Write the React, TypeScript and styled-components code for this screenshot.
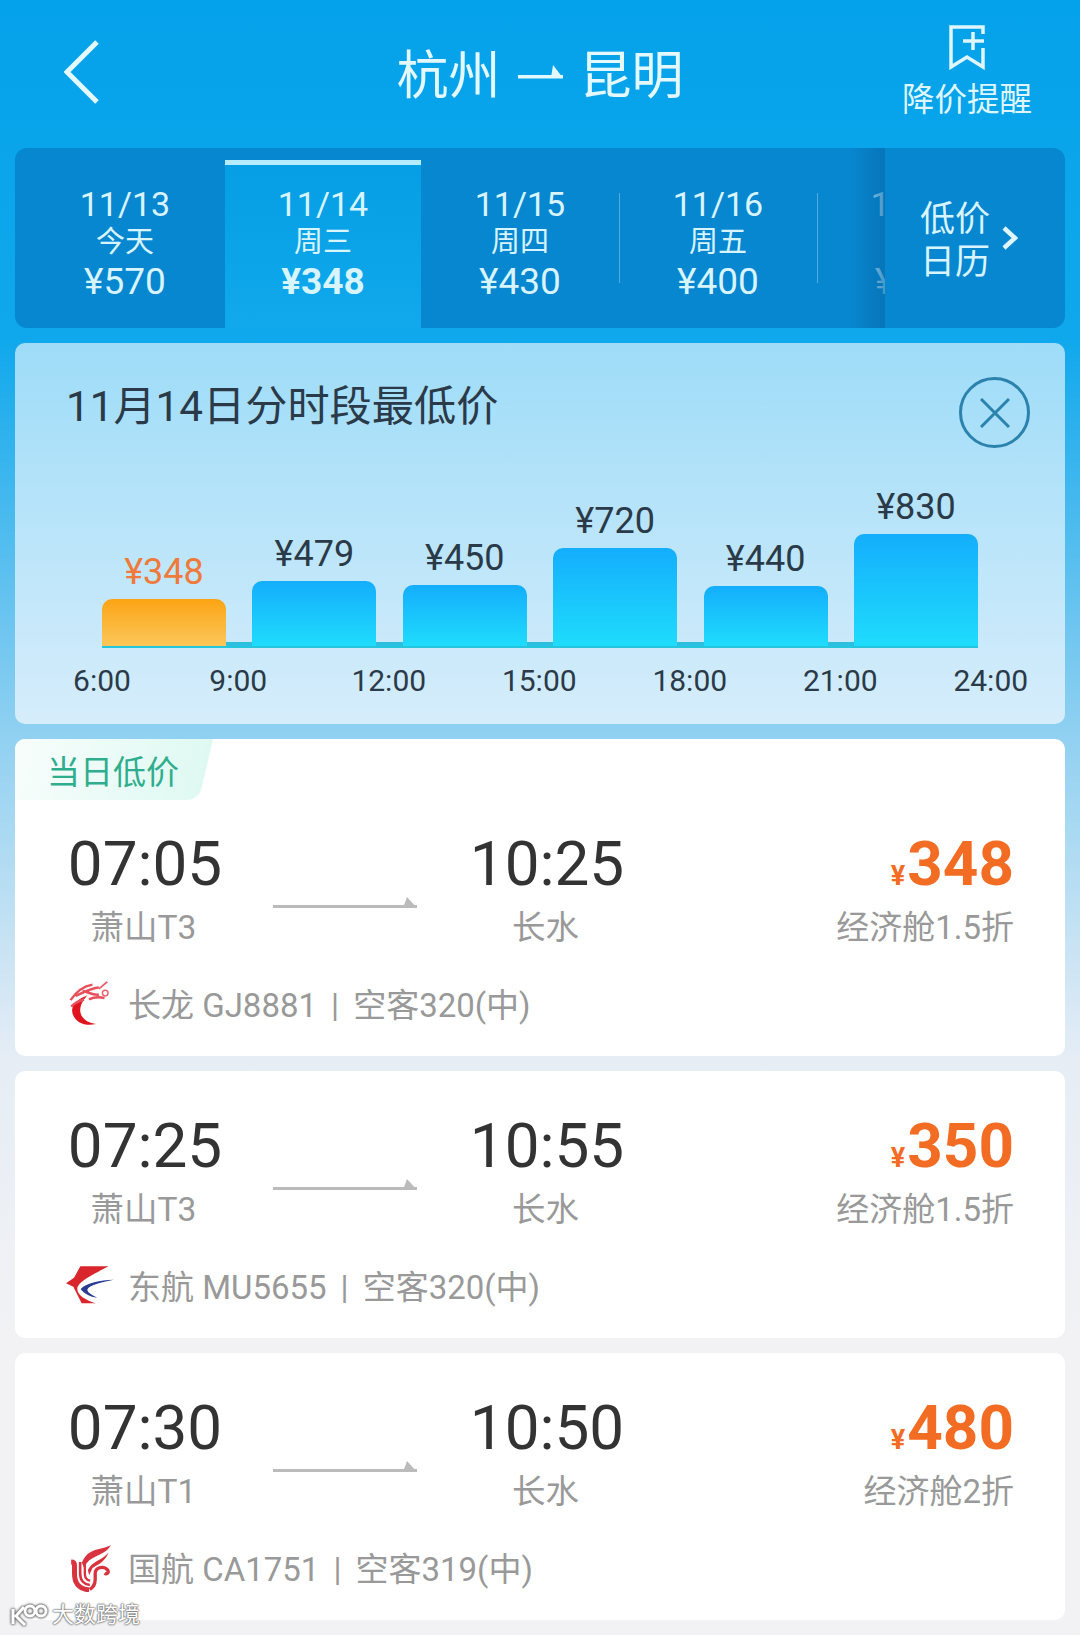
import React from 'react';
import styled, { createGlobalStyle } from 'styled-components';

const GlobalStyle = createGlobalStyle`
  html, body {
    margin: 0;
    padding: 0;
  }
  body {
    font-family: Roboto, "Noto Sans CJK SC", sans-serif;
  }
`;

const Page = styled.div`
  position: relative;
  width: 1080px;
  height: 1635px;
  overflow: hidden;
  background: linear-gradient(
    180deg,
    #04a2ea 0,
    #10a8ec 340px,
    #8fd0f1 730px,
    #e6edf5 1060px,
    #f2f2f5 1340px
  );
`;

const Header = styled.header`
  height: 148px;
  display: grid;
  grid-template-columns: 1fr auto 1fr;
  align-items: center;
  color: #dff6ff;
`;

const BackButton = styled.div`
  padding-left: 64px;
  margin-top: -4px;
  display: flex;
  align-items: center;
`;

const Title = styled.h1`
  margin: 5px 0 0;
  display: flex;
  align-items: center;
  gap: 17px;
  font-size: 52px;
  line-height: 60px;
  font-weight: 400;
  color: #e4f8ff;
`;

const TitleArrow = styled.svg`
  margin-top: -10px;
`;

const Remind = styled.div`
  justify-self: end;
  padding-right: 48px;
  display: flex;
  flex-direction: column;
  align-items: center;
  gap: 10px;
  font-size: 32.5px;
  line-height: 40px;
  margin-top: -4px;
`;

const TabBar = styled.nav`
  margin: 0 15px;
  height: 180px;
  display: flex;
  border-radius: 12px;
  overflow: hidden;
  background: #0787d0;
  color: #d8f4ff;
`;

const TabScroller = styled.div`
  position: relative;
  width: 870px;
  display: flex;
  overflow: hidden;
  &::after {
    content: '';
    position: absolute;
    top: 0;
    right: 0;
    bottom: 0;
    width: 36px;
    background: linear-gradient(90deg, rgba(7, 110, 175, 0), rgba(7, 110, 175, 0.7));
  }
`;

const Tab = styled.div<{ $active?: boolean; $first?: boolean; $divider?: boolean }>`
  position: relative;
  flex: 0 0 ${(p) => (p.$first ? 210 : p.$active ? 196 : 198)}px;
  box-sizing: border-box;
  margin-top: ${(p) => (p.$active ? 12 : 0)}px;
  padding-top: ${(p) => (p.$active ? 20 : 37)}px;
  padding-left: ${(p) => (p.$first ? 10 : 0)}px;
  display: flex;
  flex-direction: column;
  align-items: center;
  background: ${(p) => (p.$active ? 'linear-gradient(180deg, #069ee4, #11a9ec)' : 'transparent')};
  border-top: ${(p) => (p.$active ? '5px solid #b4ecfc' : 'none')};
  &::after {
    content: '';
    display: ${(p) => (p.$divider ? 'block' : 'none')};
    position: absolute;
    top: 45px;
    right: -1px;
    width: 1px;
    height: 90px;
    background: rgba(255, 255, 255, 0.3);
  }
`;

const TabDate = styled.div`
  font-size: 34px;
  line-height: 38px;
`;

const TabWeek = styled.div`
  font-size: 29px;
  line-height: 38px;
`;

const TabPrice = styled.div<{ $active?: boolean }>`
  font-size: 37px;
  line-height: 42px;
  font-weight: ${(p) => (p.$active ? 700 : 400)};
`;

const CalendarLink = styled.div`
  flex: 1;
  display: flex;
  align-items: center;
  padding-left: 35px;
  gap: 12px;
  font-size: 35px;
  line-height: 43px;
`;

const CalendarText = styled.div`
  margin-top: 5px;
`;

const Panel = styled.section`
  margin: 15px 15px 0;
  height: 381px;
  box-sizing: border-box;
  border-radius: 10px;
  background: linear-gradient(180deg, #9edcf8, #d6edfb);
`;

const PanelHead = styled.div`
  height: 105px;
  box-sizing: border-box;
  padding: 34px 35px 0 51px;
  display: flex;
  justify-content: space-between;
`;

const PanelTitle = styled.h2`
  margin: -5px 0 0;
  font-size: 42.2px;
  line-height: 70px;
  font-weight: 400;
  color: #2a3a48;
`;

const CloseButton = styled.div`
  width: 71px;
  height: 71px;
  box-sizing: border-box;
  border: 3px solid #2b82ac;
  border-radius: 50%;
  display: flex;
  align-items: center;
  justify-content: center;
`;

const Chart = styled.div`
  margin-left: 87px;
  width: 876px;
  height: 200px;
  box-sizing: border-box;
  display: flex;
  align-items: flex-end;
  border-bottom: 2px solid #25c6dc;
`;

const BarColumn = styled.div`
  flex: 0 0 124px;
  display: flex;
  flex-direction: column;
  align-items: center;
`;

const BarLabel = styled.div<{ $low?: boolean }>`
  font-size: 36px;
  line-height: 40px;
  margin-bottom: 7px;
  color: ${(p) => (p.$low ? '#ef7a3a' : '#2a3a48')};
`;

const Bar = styled.div<{ $low?: boolean; $h: number }>`
  width: 100%;
  height: ${(p) => p.$h}px;
  border-radius: 10px 10px 0 0;
  background: ${(p) =>
    p.$low
      ? 'linear-gradient(180deg, #fca414, #fbc75a)'
      : 'linear-gradient(180deg, #14aefc, #1fdcfc)'};
`;

const BarGap = styled.div`
  flex: 0 0 26.4px;
  height: 4px;
  background: #2cbfe0;
`;

const Axis = styled.div`
  margin-top: 13px;
  padding-left: 26px;
  display: grid;
  grid-template-columns: 122px repeat(6, 150.5px);
`;

const Tick = styled.div`
  text-align: center;
  font-size: 30px;
  line-height: 40px;
  color: #2a3a48;
`;

const Card = styled.article`
  margin: 15px 15px 0;
  padding-bottom: 28px;
  border-radius: 10px;
  background: #fff;
  overflow: hidden;
`;

const LowTag = styled.div`
  position: relative;
  isolation: isolate;
  overflow: hidden;
  width: 206px;
  height: 61px;
  margin-bottom: -11px;
  box-sizing: border-box;
  padding: 6px 0 0 32px;
  font-size: 33px;
  line-height: 55px;
  color: #2fae8d;
  &::before {
    content: '';
    position: absolute;
    z-index: -1;
    top: 0;
    bottom: 0;
    left: -30px;
    right: 15px;
    border-radius: 0 0 12px 0;
    transform: skewX(-13deg);
    background: linear-gradient(90deg, #fbfefd, #dff9f2);
  }
`;

const FlightRow = styled.div`
  margin-top: 39px;
  padding: 0 51px 0 52px;
  display: flex;
`;

const TimeColumn = styled.div`
  flex: 0 0 156px;
  display: flex;
  flex-direction: column;
  align-items: center;
`;

const Time = styled.div`
  font-size: 62px;
  line-height: 72px;
  color: #333;
`;

const Airport = styled.div`
  margin-top: 8px;
  margin-right: 3px;
  font-size: 33.5px;
  line-height: 40px;
  color: #999;
`;

const RouteArrow = styled.svg`
  flex: 0 0 144px;
  margin: 69px 52px 0 50px;
  height: 12px;
`;

const PriceColumn = styled.div`
  margin-left: auto;
  display: flex;
  flex-direction: column;
  align-items: flex-end;
`;

const Price = styled.div`
  font-size: 62px;
  line-height: 72px;
  font-weight: 700;
  color: #f36c23;
`;

const Yen = styled.span`
  font-size: 27px;
  line-height: 0;
  margin-right: 2px;
`;

const Cabin = styled.div`
  margin-top: 8px;
  font-size: 33px;
  line-height: 40px;
  color: #999;
`;

const PlaneRow = styled.div`
  margin-top: 30px;
  height: 50px;
  padding-left: 50px;
  display: flex;
  align-items: center;
  gap: 13px;
  font-size: 33px;
  color: #999;
`;

const LogoBox = styled.div`
  flex: 0 0 50px;
  height: 50px;
  display: flex;
  align-items: center;
  justify-content: center;
`;

const Divider = styled.span`
  margin: 0 14px;
`;

const Watermark = styled.div`
  position: absolute;
  left: 10px;
  bottom: 7px;
  display: flex;
  align-items: center;
  gap: 4px;
  font-size: 22px;
  line-height: 26px;
  color: #fff;
  text-shadow: 0 0 2px #666, 0 0 2px #666, 0 0 1px #666;
`;

const WatermarkMark = styled.svg`
  filter: drop-shadow(0 0 1px #666) drop-shadow(0 0 1px #666);
`;

const DragonLogo = () => (
  <svg width="46" height="50" viewBox="60 30 130 140" fill="none">
    <path d="M118 78C80 92 62 118 84 145c12 14 34 20 58 14-22-2-40-14-44-32-3-18 6-34 20-49z" fill="#e0141e" />
    <path d="M70 92c16-24 38-40 62-44M84 80c20-8 40-22 66-24M104 66c14 2 32 14 46 10M72 110c12-12 22-16 36-20M122 90c12-6 26-8 44-4" stroke="#e8505c" strokeWidth="7" />
    <circle cx="168" cy="72" r="8" stroke="#e8606a" strokeWidth="4" />
    <path d="M150 60l24-20" stroke="#e8606a" strokeWidth="5" />
  </svg>
);

const EasternLogo = () => (
  <svg width="50" height="44" viewBox="75 65 150 130">
    <path d="M206 74H121L102 108 78 125l22 10 25 50h42C135 175 112 160 112 143 112 125 135 110 206 74z" fill="#d9262c" />
    <path d="M221 114C180 116 140 122 122 142 132 156 150 166 172 168 156 160 142 152 142 144 146 130 185 122 221 114z" fill="#2a3b93" />
  </svg>
);

const AirChinaLogo = () => (
  <svg width="46" height="50" viewBox="25 30 135 150" fill="none" stroke="#d8333e">
    <path d="M36 90c8 0 10 4 10 10v25c0 30 14 45 44 49" strokeWidth="15" />
    <path d="M63 90v35c0 20 12 32 29 34" strokeWidth="8" />
    <path d="M77 88v37c0 10 6 19 16 21" strokeWidth="7" />
    <path d="M68 92C88 46 125 55 155 40 142 64 115 68 95 82 85 89 80 95 76 110z" fill="#d8333e" stroke="none" />
    <path d="M86 114C100 85 125 88 148 62 137 90 115 98 100 108L90 130z" fill="#d8333e" stroke="none" />
    <path d="M92 172c20-12 16-32 16-47 0-20 27-25 38-10 4 7-4 13-10 9" strokeWidth="10" />
  </svg>
);

const WatermarkLogo = () => (
  <WatermarkMark width="38" height="24" viewBox="0 0 38 24" fill="none" stroke="#fff" strokeWidth="3">
    <path d="M3 6v15M14 4L6 13l9 9" />
    <circle cx="20" cy="8" r="5" />
    <circle cx="31" cy="8" r="5" />
  </WatermarkMark>
);

const dates = [
  { date: '11/13', week: '今天', price: '¥570', first: true },
  { date: '11/14', week: '周三', price: '¥348', active: true },
  { date: '11/15', week: '周四', price: '¥430', divider: true },
  { date: '11/16', week: '周五', price: '¥400', divider: true },
  { date: '11/17', week: '周六', price: '¥420' },
];

const bars = [
  { price: '¥348', h: 47, low: true },
  { price: '¥479', h: 65 },
  { price: '¥450', h: 61 },
  { price: '¥720', h: 98 },
  { price: '¥440', h: 60 },
  { price: '¥830', h: 112 },
];

const ticks = ['6:00', '9:00', '12:00', '15:00', '18:00', '21:00', '24:00'];

const flights = [
  {
    dep: '07:05',
    depPort: '萧山T3',
    arr: '10:25',
    price: '348',
    cabin: '经济舱1.5折',
    plane: '长龙 GJ8881',
    model: '空客320(中)',
    logo: <DragonLogo />,
    low: true,
  },
  {
    dep: '07:25',
    depPort: '萧山T3',
    arr: '10:55',
    price: '350',
    cabin: '经济舱1.5折',
    plane: '东航 MU5655',
    model: '空客320(中)',
    logo: <EasternLogo />,
  },
  {
    dep: '07:30',
    depPort: '萧山T1',
    arr: '10:50',
    price: '480',
    cabin: '经济舱2折',
    plane: '国航 CA1751',
    model: '空客319(中)',
    logo: <AirChinaLogo />,
  },
];

const App: React.FC = () => {
  return (
    <Page>
      <GlobalStyle />
      <Header>
        <BackButton>
          <svg width="36" height="64" viewBox="0 0 36 64" fill="none" stroke="#e4f8ff" strokeWidth="5">
            <path d="M33 2L3 32l30 30" />
          </svg>
        </BackButton>
        <Title>
          <span>杭州</span>
          <TitleArrow width="45" height="14" viewBox="0 0 45 14" fill="#e4f8ff">
            <polygon points="35,0 45,13 33,13" />
            <rect x="0" y="10" width="45" height="3.5" />
          </TitleArrow>
          <span>昆明</span>
        </Title>
        <Remind>
          <svg width="38" height="46" viewBox="0 0 38 46" fill="none" stroke="#dff6ff" strokeWidth="3.5">
            <path d="M35 10V3H3v40l16-10 16 10V24" />
            <path d="M15 17h21M25 8v18" />
          </svg>
          <span>降价提醒</span>
        </Remind>
      </Header>

      <TabBar>
        <TabScroller>
          {dates.map((d) => (
            <Tab key={d.date} $active={d.active} $first={d.first} $divider={d.divider}>
              <TabDate>{d.date}</TabDate>
              <TabWeek>{d.week}</TabWeek>
              <TabPrice $active={d.active}>{d.price}</TabPrice>
            </Tab>
          ))}
        </TabScroller>
        <CalendarLink>
          <CalendarText>
            低价
            <br />
            日历
          </CalendarText>
          <svg width="16" height="24" viewBox="0 0 16 24" fill="none" stroke="#dff6ff" strokeWidth="4.5">
            <path d="M2 2l11 10L2 22" />
          </svg>
        </CalendarLink>
      </TabBar>

      <Panel>
        <PanelHead>
          <PanelTitle>11月14日分时段最低价</PanelTitle>
          <CloseButton>
            <svg width="30" height="30" viewBox="0 0 30 30" fill="none" stroke="#2b82ac" strokeWidth="3">
              <path d="M1 1l28 28M29 1L1 29" />
            </svg>
          </CloseButton>
        </PanelHead>
        <Chart>
          {bars.map((b, i) => (
            <React.Fragment key={b.price}>
              {i > 0 && <BarGap />}
              <BarColumn>
                <BarLabel $low={b.low}>{b.price}</BarLabel>
                <Bar $low={b.low} $h={b.h} />
              </BarColumn>
            </React.Fragment>
          ))}
        </Chart>
        <Axis>
          {ticks.map((t) => (
            <Tick key={t}>{t}</Tick>
          ))}
        </Axis>
      </Panel>

      {flights.map((f) => (
        <Card key={f.dep}>
          {f.low && <LowTag>当日低价</LowTag>}
          <FlightRow>
            <TimeColumn>
              <Time>{f.dep}</Time>
              <Airport>{f.depPort}</Airport>
            </TimeColumn>
            <RouteArrow viewBox="0 0 144 12" fill="#bbb">
              <polygon points="134,0 144,11 130,11" />
              <rect x="0" y="8" width="144" height="3" />
            </RouteArrow>
            <TimeColumn>
              <Time>{f.arr}</Time>
              <Airport>长水</Airport>
            </TimeColumn>
            <PriceColumn>
              <Price>
                <Yen>¥</Yen>
                {f.price}
              </Price>
              <Cabin>{f.cabin}</Cabin>
            </PriceColumn>
          </FlightRow>
          <PlaneRow>
            <LogoBox>{f.logo}</LogoBox>
            <span>
              {f.plane}
              <Divider>|</Divider>
              {f.model}
            </span>
          </PlaneRow>
        </Card>
      ))}

      <Watermark>
        <WatermarkLogo />
        <span>大数跨境</span>
      </Watermark>
    </Page>
  );
};

export default App;
